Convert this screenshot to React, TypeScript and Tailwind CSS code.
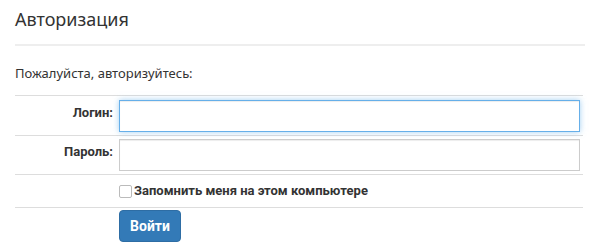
const bold = { fontFamily: 'Roboto, "Noto Sans", sans-serif' };

export default function App() {
  return (
    <div
      className="h-[251px] w-[600px] bg-white px-[15px] text-[13px] text-[#333]"
      style={{ fontFamily: '"Noto Sans", "Open Sans", sans-serif' }}
    >
      <h1 className="border-b-2 border-[#eeeeee] pt-[6px] pb-[12px] text-[18px] leading-[26px] text-[#333]">
        Авторизация
      </h1>
      <p className="mt-[17px] mb-[12px] leading-[20px]">Пожалуйста, авторизуйтесь:</p>
      <div className="w-[568px]">
        <div className="flex border-t border-[#dddddd] pt-[4px] pb-[3px] pr-[3px]">
          <label style={bold} className="w-[104px] shrink-0 pr-[6px] pt-[3px] text-right font-bold leading-[20px]">
            Логин:
          </label>
          <input
            type="text"
            className="h-[32px] flex-1 border border-[#66afe9] bg-white px-2 shadow-[inset_0_1px_1px_rgba(0,0,0,0.075),0_0_6px_rgba(102,175,233,0.6)] outline-none"
          />
        </div>
        <div className="flex border-t border-[#dddddd] py-[3px] pr-[3px]">
          <label style={bold} className="w-[104px] shrink-0 pr-[6px] pt-[3px] text-right font-bold leading-[20px]">
            Пароль:
          </label>
          <input
            type="password"
            className="h-[32px] flex-1 border border-[#cccccc] bg-white px-2 shadow-[inset_0_1px_1px_rgba(0,0,0,0.075)] outline-none"
          />
        </div>
        <div className="flex border-t border-[#dddddd] py-[6px]">
          <div className="w-[104px] shrink-0" />
          <label style={bold} className="flex items-center gap-[2px] font-bold leading-[20px]">
            <span className="inline-block h-[13px] w-[13px] rounded-[2px] border border-[#bbbbbb] bg-white" />
            Запомнить меня на этом компьютере
          </label>
        </div>
        <div className="flex border-t border-[#dddddd] pt-[2px]">
          <div className="w-[104px] shrink-0" />
          <button
            style={bold}
            className="h-[32px] w-[62px] rounded-[4px] border border-[#2e6da4] bg-[#337ab7] text-[14px] font-bold text-white"
          >
            Войти
          </button>
        </div>
      </div>
    </div>
  );
}
